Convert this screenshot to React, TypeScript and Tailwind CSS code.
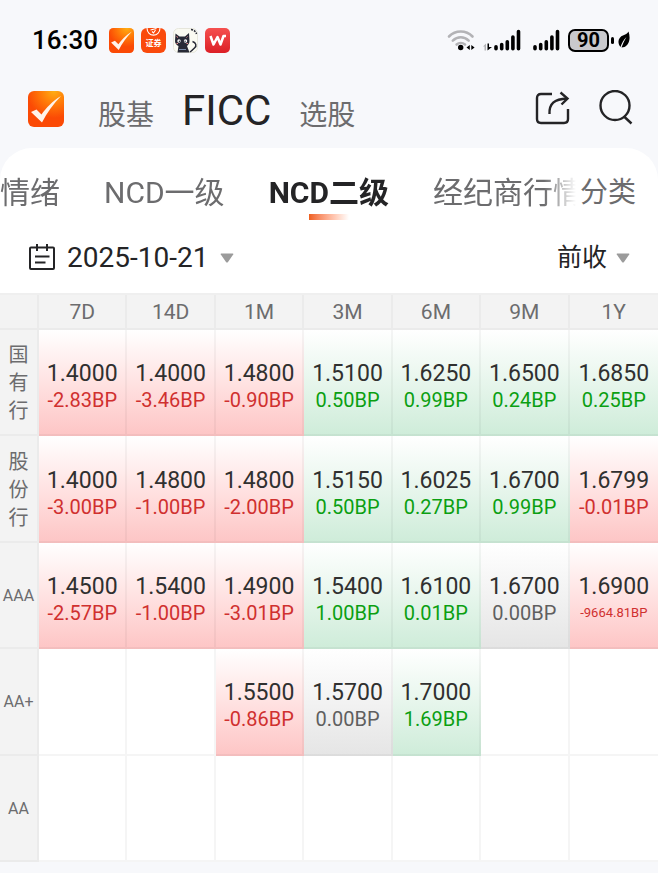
import React, { useState } from 'react';

type Quote = { rate: string; change: string } | null;

interface QuoteRow {
  issuer: string;
  vertical?: boolean;
  quotes: Quote[];
}

const TERMS = ['7D', '14D', '1M', '3M', '6M', '9M', '1Y'];

const TABS = ['情绪', 'NCD一级', 'NCD二级', '经纪商行情'];

const q = (rate: string, change: string): Quote => ({ rate, change });

const ROWS: QuoteRow[] = [
  {
    issuer: '国有行',
    vertical: true,
    quotes: [q('1.4000', '-2.83'), q('1.4000', '-3.46'), q('1.4800', '-0.90'), q('1.5100', '0.50'), q('1.6250', '0.99'), q('1.6500', '0.24'), q('1.6850', '0.25')],
  },
  {
    issuer: '股份行',
    vertical: true,
    quotes: [q('1.4000', '-3.00'), q('1.4800', '-1.00'), q('1.4800', '-2.00'), q('1.5150', '0.50'), q('1.6025', '0.27'), q('1.6700', '0.99'), q('1.6799', '-0.01')],
  },
  {
    issuer: 'AAA',
    quotes: [q('1.4500', '-2.57'), q('1.5400', '-1.00'), q('1.4900', '-3.01'), q('1.5400', '1.00'), q('1.6100', '0.01'), q('1.6700', '0.00'), q('1.6900', '-9664.81')],
  },
  {
    issuer: 'AA+',
    quotes: [null, null, q('1.5500', '-0.86'), q('1.5700', '0.00'), q('1.7000', '1.69'), null, null],
  },
  { issuer: 'AA', quotes: [null, null, null, null, null, null, null] },
];

const getCellBg = (quote: Quote) => {
  if (!quote) return 'bg-white';
  const value = parseFloat(quote.change);
  if (value < 0) return 'bg-linear-to-b from-white to-[#fdc5c5]';
  if (value > 0) return 'bg-linear-to-b from-white to-[#ceecd9]';
  return 'bg-linear-to-b from-white to-[#e5e5e5]';
};

const getChangeColor = (change: string) => {
  const value = parseFloat(change);
  if (value < 0) return 'text-[#d0302f]';
  if (value > 0) return 'text-[#0b9f12]';
  return 'text-[#5f5f5f]';
};

const CheckLogo = ({ id, className }: { id: string; className: string }) => (
  <svg viewBox="0 0 36 36" className={className}>
    <defs>
      <radialGradient id={id} cx="0.72" cy="0" r="0.75">
        <stop offset="0" stopColor="#ffae12" />
        <stop offset="0.5" stopColor="#ff7a08" />
        <stop offset="1" stopColor="#fb4a05" />
      </radialGradient>
    </defs>
    <rect width="36" height="36" rx="6" fill={`url(#${id})`} />
    <path d="M3 21 L8.500 18.500 L13.500 23.500 C18 17 24 10.500 33 5 C25.500 13 19 21.500 14 31.500 Z" fill="#fff3ea" />
  </svg>
);

const BrokerIcon = () => (
  <span className="relative flex h-[25px] w-[25px] items-end justify-center overflow-hidden rounded-md bg-[#fa4a0c] pb-1 text-[8px] leading-[10px] font-bold text-white">
    <svg viewBox="0 0 25 9" className="absolute inset-x-0 top-0 h-[9px] w-[25px]" fill="none" stroke="#fff" strokeWidth="1.1">
      <path d="M6 0 C6 9.500 19 9.500 19 0" />
      <path d="M9.500 2 L15.500 0.500 M11 3.500 L12.500 5 L14.500 2" />
    </svg>
    证券
  </span>
);

const CatIcon = () => (
  <svg viewBox="0 0 25 25" className="h-[25px] w-[25px]">
    <rect x="0.500" y="0.500" width="24" height="24" rx="5" fill="#fafaf2" stroke="#e6e6dc" />
    <path d="M2.500 5.500 L6.500 8.500 H12 L16 5 L16.500 13 C16.500 15.500 15 17 14 18 L16.500 24.500 H4.500 L5.500 18 C3.500 17 2 15.500 2 13 Z" fill="#272936" />
    <path d="M18 1.500 C21 2 23 3.500 23.500 6" fill="none" stroke="#272936" strokeWidth="1.500" strokeDasharray="2 1" />
    <path d="M19.500 13.500 C23 14.500 24 18 21.500 20 C20 21.500 19 22.500 17 24" fill="none" stroke="#272936" strokeWidth="1.500" />
    <circle cx="6" cy="13" r="1.700" fill="#fff" />
    <circle cx="12.500" cy="13" r="1.700" fill="#fff" />
    <circle cx="6.400" cy="13.200" r="0.700" fill="#272936" />
    <circle cx="12.100" cy="13.200" r="0.700" fill="#272936" />
    <path d="M3.500 15.500 H5 M13.500 15.500 H15 M3.500 8.500 L5 9.500 M14.500 8.500 L13.500 9.500" stroke="#ee8c8c" />
    <path d="M6 21.500 H13" stroke="#7889a8" />
  </svg>
);

const WpsIcon = () => (
  <svg viewBox="0 0 25 25" className="h-[25px] w-[25px]">
    <defs>
      <linearGradient id="wps" x1="0" y1="0" x2="0" y2="1">
        <stop offset="0" stopColor="#f5504f" />
        <stop offset="1" stopColor="#dc1f26" />
      </linearGradient>
    </defs>
    <rect width="25" height="25" rx="5" fill="url(#wps)" />
    <path d="M5.500 8 L8.500 16.500 L12.500 9 L15.500 16.500 L18.500 8 H21" fill="none" stroke="#fff" strokeWidth="2.500" strokeLinejoin="round" />
  </svg>
);

const WifiIcon = () => (
  <svg viewBox="0 0 28 24" className="h-6 w-7" fill="none">
    <g stroke="#b3b3b6" strokeWidth="2.600" strokeLinecap="round">
      <path d="M2 8.500 C8.500 1.800 19 1.800 25.500 8.500" />
      <path d="M5.800 12.600 C10.500 8.200 17 8.200 21.700 12.600" />
      <path d="M9.600 16.500 C12 14.400 15.500 14.400 18 16.500" />
    </g>
    <circle cx="13.700" cy="19.500" r="2.700" fill="#000" />
    <path d="M22.800 17 V22 L19.500 19.500 Z M24.300 17 L27.600 19.500 L24.300 22 Z" fill="#000" />
  </svg>
);

const SignalIcon = ({ data }: { data?: boolean }) => (
  <svg viewBox={data ? '-11 0 38 22' : '0 0 27 22'} className={data ? 'h-[22px] w-[38px]' : 'h-[22px] w-[27px]'}>
    <g stroke="#000" strokeWidth="3.600" strokeLinecap="round">
      <path d="M2 17.800 V19.800 M7.700 15.500 V19.800 M13.300 12.800 V19.800 M18.900 8 V19.800 M24.500 2.500 V19.800" />
    </g>
    {data && (
      <>
        <path d="M-11 17.500 L-8 14.500 V21.500 H-9.500 V17.500 Z" fill="#b3b3b6" />
        <path d="M-6.500 14.500 V21.500 L-2 18 H-5 V14.500 Z" fill="#000" />
      </>
    )}
  </svg>
);

const CaretDown = () => (
  <svg viewBox="0 0 14 10" className="pointer-events-none h-[10px] w-[14px] shrink-0">
    <path d="M1.200 0.500 H12.800 Q14 0.500 13.200 1.600 L8 9 Q7 10 6 9 L0.800 1.600 Q0 0.500 1.200 0.500 Z" fill="#9b9b9b" />
  </svg>
);

const StatusBar = () => (
  <div className="flex h-20 items-center justify-between pr-7 pl-8 text-black">
    <div className="flex items-center gap-[7px]">
      <span className="mr-1 text-[26px] leading-8 font-medium">16:30</span>
      <CheckLogo id="statusCheck" className="h-[25px] w-[25px]" />
      <BrokerIcon />
      <CatIcon />
      <WpsIcon />
    </div>
    <div className="flex items-center">
      <WifiIcon />
      <span className="ml-2">
        <SignalIcon data />
      </span>
      <span className="ml-3">
        <SignalIcon />
      </span>
      <span className="ml-2 flex h-[23px] w-[41px] items-center justify-center rounded-[7px] border-2 border-black bg-[#c9c9cc] text-[20px] leading-5 font-bold">90</span>
      <span className="ml-[2px] h-[7px] w-[3px] rounded-full bg-black"></span>
      <svg viewBox="0 0 12 18" className="ml-1 h-[18px] w-3">
        <path d="M10.500 0.500 C12.500 6 12 13 6.500 16 L3.500 16.500 C5 12.500 6.500 9.500 8.500 6 C5.500 9 3.500 12.500 2.500 16 C-1 12 0 6 5.500 4.200 C8 3.300 9.500 2.500 10.500 0.500 Z" fill="#000" />
      </svg>
    </div>
  </div>
);

const Header = () => (
  <header className="flex h-[68px] items-start justify-between pr-6 pl-7">
    <div className="flex items-start">
      <CheckLogo id="appCheck" className="mt-[11px] h-9 w-9" />
      <nav className="flex items-baseline gap-7 pl-[34px] text-[28px] leading-[62px] text-[#6c6c6e]">
        <a href="#fund">股基</a>
        <a href="#ficc" className="text-[42px] text-[#242426]">FICC</a>
        <a href="#pick">选股</a>
      </nav>
    </div>
    <div className="flex items-center gap-7 pt-[10px]">
      <button aria-label="分享">
        <svg viewBox="0 0 36 36" className="h-9 w-9" fill="none" stroke="#242426" strokeWidth="2.400">
          <path d="M18 4 H7 Q3 4 3 8 V29 Q3 33 7 33 H30 Q34 33 34 29 V19" />
          <path d="M15.500 24 C15 14 20 9 33 8.500" />
          <path d="M26.500 2.500 L33.500 8.500 L27.500 14.500" />
        </svg>
      </button>
      <button aria-label="搜索">
        <svg viewBox="0 0 36 36" className="h-9 w-9" fill="none" stroke="#242426" strokeWidth="2.400">
          <circle cx="17" cy="15.500" r="14.500" />
          <path d="M26 26.500 L33.500 33.500" />
        </svg>
      </button>
    </div>
  </header>
);

const App: React.FC = () => {
  const [activeTab, setActiveTab] = useState('NCD二级');

  return (
    <div className="min-h-screen overflow-hidden bg-[#f7f8fb] font-[Roboto,'Noto_Sans_CJK_SC',sans-serif]">
      <StatusBar />
      <Header />

      <main className="rounded-t-[32px] bg-white">
        <div className="flex h-[78px] items-start overflow-hidden pt-5 pr-[22px]">
          <div className="flex min-w-0 flex-1 gap-11 overflow-hidden mask-r-from-[calc(100%-32px)] text-[30px] leading-[50px] text-[#6c6c6e]">
            {TABS.map((tab) => (
              <button
                key={tab}
                onClick={() => setActiveTab(tab)}
                className={`flex shrink-0 flex-col items-center whitespace-nowrap ${tab === activeTab ? 'font-bold text-[#242426]' : ''}`}
              >
                {tab}
                {tab === activeTab && <span className="-mt-1 h-[6px] w-10 bg-linear-to-r from-[#ee5f1c] to-white"></span>}
              </button>
            ))}
          </div>
          <button className="shrink-0 pl-1 text-[28px] leading-[50px] text-[#6c6c6e]">分类</button>
        </div>

        <div className="flex h-[67px] items-center justify-between pr-7 pb-1 pl-7 text-[#242426]">
          <button className="flex items-center text-[28px] leading-10">
            <svg viewBox="0 0 28 28" className="mr-[11px] h-7 w-7" fill="none" stroke="#242426" strokeWidth="2">
              <rect x="2" y="3.500" width="24" height="21.500" rx="1" />
              <path d="M9 0 V7 M19 0 V7 M7 12.500 H21.500 M7 18.500 H17.500" />
            </svg>
            2025-10-21
            <span className="ml-3 flex">
              <CaretDown />
            </span>
          </button>
          <div className="flex items-center gap-2">
            <select aria-label="比较基准" className="appearance-none bg-transparent text-[25px] leading-10">
              <option>前收</option>
            </select>
            <CaretDown />
          </div>
        </div>

        <table className="h-[569px] w-full table-fixed border-separate border-spacing-0 border-t-2 border-[#efefef] text-center">
          <thead>
            <tr className="h-[35px] bg-[#f3f3f3] text-[21px] leading-8 text-[#6c6c6e]">
              <th className="w-[39px] border-r-2 border-b-2 border-black/3"></th>
              {TERMS.map((term) => (
                <th key={term} scope="col" className="border-r-2 border-b-2 border-black/3 font-normal last:border-r-0">{term}</th>
              ))}
            </tr>
          </thead>
          <tbody>
            {ROWS.map((row) => (
              <tr key={row.issuer} className="h-[106px]">
                <th scope="row" className="border-r-2 border-b-2 border-black/3 bg-[#f3f3f3] pt-[2px] font-normal text-[#6c6c6e]">
                  <span className={row.vertical ? 'mx-auto block w-[21px] text-[20px] leading-7 break-all' : 'block text-[16px] leading-6'}>{row.issuer}</span>
                </th>
                {row.quotes.map((quote, i) => (
                  <td key={TERMS[i]} className={`border-r-2 border-b-2 border-black/4 bg-origin-border pt-[10px] last:border-r-0 ${getCellBg(quote)}`}>
                    {quote && (
                      <>
                        <div className="text-[23px] leading-[26px] text-[#303030]">{quote.rate}</div>
                        <div className={`leading-[26px] ${quote.change.length > 6 ? 'text-[13px]' : 'text-[20px]'} ${getChangeColor(quote.change)}`}>{quote.change}BP</div>
                      </>
                    )}
                  </td>
                ))}
              </tr>
            ))}
          </tbody>
        </table>
      </main>
    </div>
  );
};

export default App;
